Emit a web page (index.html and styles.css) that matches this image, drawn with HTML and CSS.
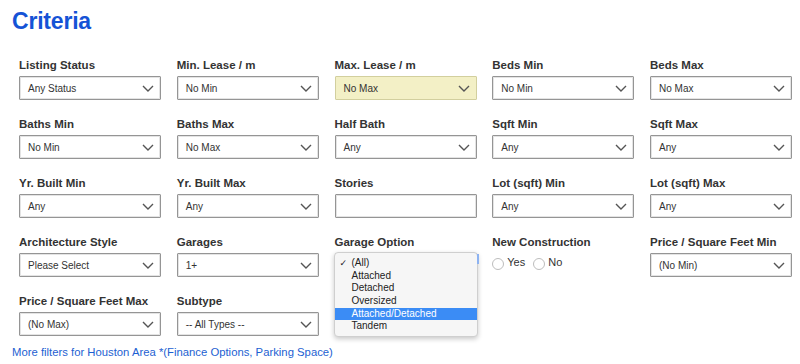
FILE: index.html
```html
<!DOCTYPE html>
<html>
<head>
<meta charset="utf-8">
<link rel="stylesheet" href="styles.css">
</head>
<body>
<div class="page">
  <h1 class="title">Criteria</h1>
  <div class="grid">
    <div class="field"><label class="lbl">Listing Status</label><div class="sel"><span>Any Status</span><svg class="chev" width="12" height="7" viewBox="0 0 12 7"><path d="M1 1 L6 6 L11 1" fill="none" stroke="#555" stroke-width="1.4"/></svg></div></div>
    <div class="field"><label class="lbl">Min. Lease / m</label><div class="sel"><span>No Min</span><svg class="chev" width="12" height="7" viewBox="0 0 12 7"><path d="M1 1 L6 6 L11 1" fill="none" stroke="#555" stroke-width="1.4"/></svg></div></div>
    <div class="field"><label class="lbl">Max. Lease / m</label><div class="sel sel-hl"><span>No Max</span><svg class="chev" width="12" height="7" viewBox="0 0 12 7"><path d="M1 1 L6 6 L11 1" fill="none" stroke="#555" stroke-width="1.4"/></svg></div></div>
    <div class="field"><label class="lbl">Beds Min</label><div class="sel"><span>No Min</span><svg class="chev" width="12" height="7" viewBox="0 0 12 7"><path d="M1 1 L6 6 L11 1" fill="none" stroke="#555" stroke-width="1.4"/></svg></div></div>
    <div class="field"><label class="lbl">Beds Max</label><div class="sel"><span>No Max</span><svg class="chev" width="12" height="7" viewBox="0 0 12 7"><path d="M1 1 L6 6 L11 1" fill="none" stroke="#555" stroke-width="1.4"/></svg></div></div>

    <div class="field"><label class="lbl">Baths Min</label><div class="sel"><span>No Min</span><svg class="chev" width="12" height="7" viewBox="0 0 12 7"><path d="M1 1 L6 6 L11 1" fill="none" stroke="#555" stroke-width="1.4"/></svg></div></div>
    <div class="field"><label class="lbl">Baths Max</label><div class="sel"><span>No Max</span><svg class="chev" width="12" height="7" viewBox="0 0 12 7"><path d="M1 1 L6 6 L11 1" fill="none" stroke="#555" stroke-width="1.4"/></svg></div></div>
    <div class="field"><label class="lbl">Half Bath</label><div class="sel"><span>Any</span><svg class="chev" width="12" height="7" viewBox="0 0 12 7"><path d="M1 1 L6 6 L11 1" fill="none" stroke="#555" stroke-width="1.4"/></svg></div></div>
    <div class="field"><label class="lbl">Sqft Min</label><div class="sel"><span>Any</span><svg class="chev" width="12" height="7" viewBox="0 0 12 7"><path d="M1 1 L6 6 L11 1" fill="none" stroke="#555" stroke-width="1.4"/></svg></div></div>
    <div class="field"><label class="lbl">Sqft Max</label><div class="sel"><span>Any</span><svg class="chev" width="12" height="7" viewBox="0 0 12 7"><path d="M1 1 L6 6 L11 1" fill="none" stroke="#555" stroke-width="1.4"/></svg></div></div>

    <div class="field"><label class="lbl">Yr. Built Min</label><div class="sel"><span>Any</span><svg class="chev" width="12" height="7" viewBox="0 0 12 7"><path d="M1 1 L6 6 L11 1" fill="none" stroke="#555" stroke-width="1.4"/></svg></div></div>
    <div class="field"><label class="lbl">Yr. Built Max</label><div class="sel"><span>Any</span><svg class="chev" width="12" height="7" viewBox="0 0 12 7"><path d="M1 1 L6 6 L11 1" fill="none" stroke="#555" stroke-width="1.4"/></svg></div></div>
    <div class="field"><label class="lbl">Stories</label><div class="txt"></div></div>
    <div class="field"><label class="lbl">Lot (sqft) Min</label><div class="sel"><span>Any</span><svg class="chev" width="12" height="7" viewBox="0 0 12 7"><path d="M1 1 L6 6 L11 1" fill="none" stroke="#555" stroke-width="1.4"/></svg></div></div>
    <div class="field"><label class="lbl">Lot (sqft) Max</label><div class="sel"><span>Any</span><svg class="chev" width="12" height="7" viewBox="0 0 12 7"><path d="M1 1 L6 6 L11 1" fill="none" stroke="#555" stroke-width="1.4"/></svg></div></div>

    <div class="field"><label class="lbl">Architecture Style</label><div class="sel"><span>Please Select</span><svg class="chev" width="12" height="7" viewBox="0 0 12 7"><path d="M1 1 L6 6 L11 1" fill="none" stroke="#555" stroke-width="1.4"/></svg></div></div>
    <div class="field"><label class="lbl">Garages</label><div class="sel"><span>1+</span><svg class="chev" width="12" height="7" viewBox="0 0 12 7"><path d="M1 1 L6 6 L11 1" fill="none" stroke="#555" stroke-width="1.4"/></svg></div></div>
    <div class="field field-open"><label class="lbl">Garage Option</label><div class="sel"><span class="under">(All)</span></div>
      <ul class="listbox">
        <li class="opt"><span class="check">✓</span>(All)</li>
        <li class="opt">Attached</li>
        <li class="opt">Detached</li>
        <li class="opt">Oversized</li>
        <li class="opt opt-active">Attached/Detached</li>
        <li class="opt">Tandem</li>
      </ul>
    </div>
    <div class="field"><label class="lbl">New Construction</label>
      <div class="radios"><span class="radio"></span>Yes<span class="radio radio-2"></span>No</div>
    </div>
    <div class="field"><label class="lbl">Price / Square Feet Min</label><div class="sel"><span>(No Min)</span><svg class="chev" width="12" height="7" viewBox="0 0 12 7"><path d="M1 1 L6 6 L11 1" fill="none" stroke="#555" stroke-width="1.4"/></svg></div></div>

    <div class="field"><label class="lbl">Price / Square Feet Max</label><div class="sel"><span>(No Max)</span><svg class="chev" width="12" height="7" viewBox="0 0 12 7"><path d="M1 1 L6 6 L11 1" fill="none" stroke="#555" stroke-width="1.4"/></svg></div></div>
    <div class="field"><label class="lbl">Subtype</label><div class="sel"><span>-- All Types --</span><svg class="chev" width="12" height="7" viewBox="0 0 12 7"><path d="M1 1 L6 6 L11 1" fill="none" stroke="#555" stroke-width="1.4"/></svg></div></div>
  </div>
  <a class="more" href="#">More filters for Houston Area *(Finance Options, Parking Space)</a>
</div>
</body>
</html>
```

FILE: styles.css
```css
html, body {
  margin: 0;
  padding: 0;
  background: #fff;
}
body {
  font-family: "Liberation Sans", Arial, sans-serif;
  color: #333;
}
.page {
  padding: 7px 0 0 12px;
}
.title {
  margin: 0;
  font-size: 23px;
  line-height: 28px;
  font-weight: 700;
  color: #1553d6;
  letter-spacing: -0.2px;
}
.grid {
  margin: 23px 0 0 7px;
  display: grid;
  grid-template-columns: repeat(5, 142px);
  column-gap: 15.75px;
  row-gap: 17px;
}
.field {
  position: relative;
  display: flex;
  flex-direction: column;
}
.lbl {
  display: block;
  font-size: 11.5px;
  line-height: 15px;
  font-weight: 700;
  color: #333;
  margin-bottom: 3px;
  white-space: nowrap;
}
.sel, .txt {
  position: relative;
  box-sizing: border-box;
  height: 24px;
  border: 1px solid #959595;
  box-shadow: inset 0 0 0 1px #e4e4e4;
  border-radius: 1px;
  background: #fff;
  display: flex;
  align-items: center;
  padding-left: 8px;
  font-size: 10px;
  color: #333;
}
.sel-hl {
  background: #f3f0c6;
  border-color: #d2cf9e;
  box-shadow: none;
}
.under {
  visibility: hidden;
}
.chev {
  position: absolute;
  right: 6px;
  top: 8px;
}
.listbox {
  position: absolute;
  left: -1px;
  top: 17px;
  width: 144px;
  margin: 0;
  padding: 4px 0 3px 0;
  list-style: none;
  box-sizing: border-box;
  background: #f6f6f6;
  border: 1px solid #cfcfcf;
  border-radius: 4px;
  box-shadow: 0 2px 5px rgba(0,0,0,0.22);
  z-index: 2;
}
.listbox::after {
  content: "";
  position: absolute;
  right: -2px;
  top: 1px;
  width: 2px;
  height: 10px;
  background: #8db3f2;
}
.opt {
  position: relative;
  height: 12.7px;
  line-height: 12.7px;
  padding-left: 17px;
  font-size: 10px;
  color: #222;
  white-space: nowrap;
}
.opt-active {
  background: #3b8cf5;
  color: #fff;
}
.check {
  position: absolute;
  left: 5px;
  top: 0;
  font-size: 9px;
  font-family: "DejaVu Sans", sans-serif;
}
.radios {
  padding-top: 2px;
  line-height: 14px;
  font-size: 11px;
  color: #333;
  white-space: nowrap;
}
.radio {
  display: inline-block;
  box-sizing: border-box;
  width: 12px;
  height: 12px;
  border: 1px solid #bdbdbd;
  border-radius: 50%;
  background: #fff;
  vertical-align: -4px;
  margin-right: 3px;
}
.radio-2 {
  margin-left: 8px;
}
.more {
  display: block;
  margin-top: 9px;
  font-size: 11.3px;
  line-height: 14px;
  color: #1d5fd2;
  text-decoration: none;
}
```
